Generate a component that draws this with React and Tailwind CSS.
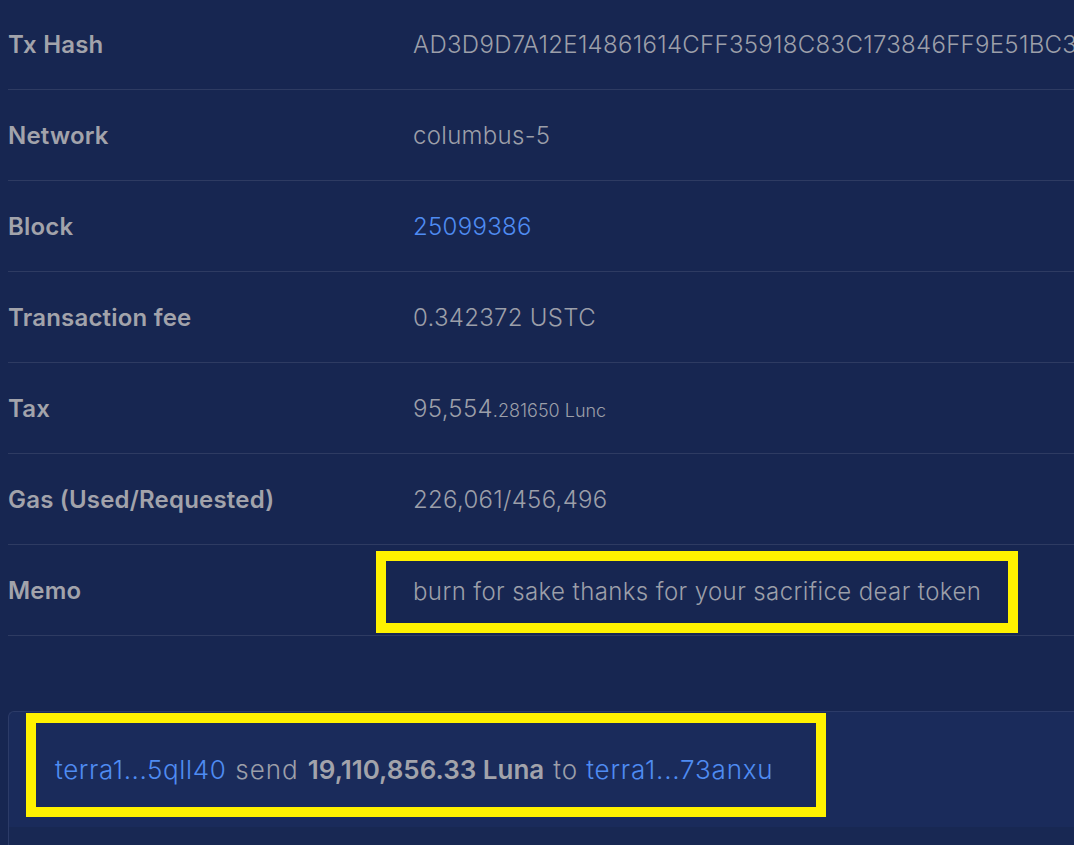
export default function App() {
  const font = { fontFamily: "Inter, 'Open Sans', sans-serif" };
  const rows = [
    { label: "Tx Hash", value: "AD3D9D7A12E14861614CFF35918C83C173846FF9E51BC3A6F" },
    { label: "Network", value: "columbus-5" },
    { label: "Block", value: "25099386", link: true },
    { label: "Transaction fee", value: "0.342372 USTC" },
    { label: "Tax", tax: true },
    { label: "Gas (Used/Requested)", value: "226,061/456,496" },
    { label: "Memo", memo: true },
  ];
  return (
    <div
      className="h-[845px] w-[1074px] overflow-hidden bg-[#172651] pl-2"
      style={font}
    >
      <div className="-mt-px">
        {rows.map((r) => (
          <div
            key={r.label}
            className="flex h-[91px] items-center border-b border-[#2e3b62] pt-[2px] whitespace-nowrap"
          >
            <div className="w-[405px] shrink-0 text-[24px] font-semibold tracking-[0.2px] text-[#a2a3ab]">
              {r.label}
            </div>
            {r.tax ? (
              <div className="text-[24px] font-light tracking-[0.3px] text-[#9c9fa9]">
                95,554<span className="text-[18px] tracking-normal">.281650 Lunc</span>
              </div>
            ) : r.memo ? (
              <div className="-ml-[37px] mt-[2px] flex h-[82px] items-center border-[10px] border-[#fff200] px-[27px] text-[24px] font-light tracking-[0.4px] text-[#9c9fa9]">
                burn for sake thanks for your sacrifice dear token
              </div>
            ) : (
              <div
                className={
                  "text-[24px] font-light tracking-[0.3px] " +
                  (r.link ? "text-[#4f8cf2]" : "text-[#9c9fa9]")
                }
              >
                {r.value}
              </div>
            )}
          </div>
        ))}
      </div>

      <div className="mt-[75px] rounded-tl-md border-l border-t border-[#2c3b68] bg-[#1a2b5b]">
        <div className="pl-[17px] pt-px pb-[10px]">
          <div className="flex h-[104px] w-[800px] items-center border-[10px] border-[#fff200] pl-[19px] pt-[9px] text-[26px] font-light whitespace-nowrap text-[#9c9fa9]">
            <span className="tracking-[0.6px] text-[#4f8cf2]">terra1...5qll40</span>
            <span className="ml-[9px] tracking-[1px]">send</span>
            <span className="ml-[9px] font-semibold text-[#a2a3ab]">19,110,856.33 Luna</span>
            <span className="ml-[9px] tracking-[1px]">to</span>
            <span className="ml-[8px] tracking-[0.8px] text-[#4f8cf2]">terra1...73anxu</span>
          </div>
        </div>
        <div className="h-[30px] bg-[#182853]" />
      </div>
    </div>
  );
}
